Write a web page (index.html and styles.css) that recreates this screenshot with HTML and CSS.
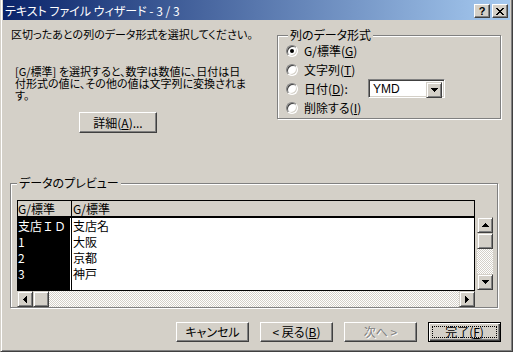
FILE: index.html
```html
<!DOCTYPE html>
<html lang="ja">
<head>
    <meta charset="UTF-8">
    <title>テキスト ファイル ウィザード - 3 / 3</title>
    <link rel="stylesheet" href="styles.css">
</head>
<body>
    <div class="window">
        <div class="titlebar">
            <span class="title">テキスト ファイル ウィザード - 3 / 3</span>
            <div class="caption-btns">
                <span class="cap-btn help">?</span>
                <span class="cap-btn close">
                    <svg width="8" height="7" viewBox="0 0 8 7"><path d="M0 0h2v1h1v1h2V1h1V0h2v1H7v1H6v1H5v1h1v1h1v1h1v1H6V6H5V5H3v1H2v1H0V6h1V5h1V4h1V3H2V2H1V1H0z" fill="#000"/></svg>
                </span>
            </div>
        </div>

        <div class="content">
            <div class="top">
                <div class="intro">
                    <p class="lead">区切ったあとの列のデータ形式を選択してください。</p>
                    <p class="note">[G/標準] を選択すると、数字は数値に、日付は日<br>付形式の値に、その他の値は文字列に変換されま<br>す。</p>
                    <button class="btn btn-detail">詳細(<u>A</u>)...</button>
                </div>

                <fieldset class="group format">
                    <legend>列のデータ形式</legend>
                    <div class="radio-row"><span class="radio checked"></span><span>G/標準(<u>G</u>)</span></div>
                    <div class="radio-row"><span class="radio"></span><span>文字列(<u>T</u>)</span></div>
                    <div class="radio-row">
                        <span class="radio"></span><span class="date-label">日付(<u>D</u>):</span>
                        <div class="combo">
                            <span class="combo-value">YMD</span>
                            <span class="sb-btn combo-btn">
                                <svg width="7" height="4" viewBox="0 0 7 4"><path d="M0 0h7v1H0zM1 1h5v1H1zM2 2h3v1H2zM3 3h1v1H3z" fill="#000"/></svg>
                            </span>
                        </div>
                    </div>
                    <div class="radio-row"><span class="radio"></span><span>削除する(<u>I</u>)</span></div>
                </fieldset>
            </div>

            <fieldset class="group preview">
                <legend>データのプレビュー</legend>
                <div class="preview-body">
                    <div class="grid-wrap">
                        <div class="grid">
                            <div class="grid-head">
                                <div class="c1">G/標準</div>
                                <div class="c2">G/標準</div>
                            </div>
                            <div class="grid-rows">
                                <div class="row"><div class="c1">支店ＩＤ</div><div class="c2">支店名</div></div>
                                <div class="row"><div class="c1">1</div><div class="c2">大阪</div></div>
                                <div class="row"><div class="c1">2</div><div class="c2">京都</div></div>
                                <div class="row"><div class="c1">3</div><div class="c2">神戸</div></div>
                                <div class="row filler"><div class="c1"></div><div class="c2"></div></div>
                            </div>
                        </div>
                        <div class="hscroll">
                            <span class="sb-btn">
                                <svg width="4" height="7" viewBox="0 0 4 7"><path d="M3 0h1v7H3zM2 1h1v5H2zM1 2h1v3H1zM0 3h1v1H0z" fill="#000"/></svg>
                            </span>
                            <span class="sb-btn"></span>
                            <span class="track"></span>
                            <span class="sb-btn">
                                <svg width="4" height="7" viewBox="0 0 4 7"><path d="M0 0h1v7H0zM1 1h1v5H1zM2 2h1v3H2zM3 3h1v1H3z" fill="#000"/></svg>
                            </span>
                        </div>
                    </div>
                    <div class="vscroll">
                        <span class="sb-btn">
                            <svg width="7" height="4" viewBox="0 0 7 4"><path d="M3 0h1v1H3zM2 1h3v1H2zM1 2h5v1H1zM0 3h7v1H0z" fill="#000"/></svg>
                        </span>
                        <span class="sb-btn"></span>
                        <span class="track"></span>
                        <span class="sb-btn">
                            <svg width="7" height="4" viewBox="0 0 7 4"><path d="M0 0h7v1H0zM1 1h5v1H1zM2 2h3v1H2zM3 3h1v1H3z" fill="#000"/></svg>
                        </span>
                    </div>
                </div>
            </fieldset>

            <div class="buttons">
                <button class="btn">キャンセル</button>
                <button class="btn">&lt; 戻る(<u>B</u>)</button>
                <button class="btn disabled">次へ &gt;</button>
                <button class="btn btn-default">完了(<u>F</u>)</button>
            </div>
        </div>
    </div>
</body>
</html>
```

FILE: styles.css
```css
html, body {
    margin: 0;
    padding: 0;
    overflow: hidden;
}

body {
    font-family: "Noto Sans CJK JP", sans-serif;
    font-size: 12px;
    line-height: 12px;
    color: #000;
    font-feature-settings: "palt";
}

.window {
    box-sizing: border-box;
    width: 513px;
    height: 352px;
    background: #d4d0c8;
    border-left: 1px solid #d4d0c8;
    border-right: 1px solid #404040;
    border-bottom: 1px solid #404040;
    box-shadow: inset 1px 0 #fff, inset -1px -1px #808080;
    padding: 0 2px 2px 2px;
}

/* title bar */
.titlebar {
    height: 20px;
    display: flex;
    align-items: flex-start;
    background: linear-gradient(to right, #0a246a, #a6caf0);
}

.title {
    color: #fff;
    padding: 4px 0 0 2px;
    line-height: 13px;
}

.caption-btns {
    margin-left: auto;
    display: flex;
    gap: 2px;
    padding: 4px 2px 0 0;
}

.cap-btn {
    box-sizing: border-box;
    width: 16px;
    height: 14px;
    background: #d4d0c8;
    border: 1px solid;
    border-color: #fff #404040 #404040 #fff;
    box-shadow: inset -1px -1px #808080;
    display: flex;
    align-items: center;
    justify-content: center;
}

.help {
    font-family: "Liberation Sans", sans-serif;
    font-weight: bold;
    font-size: 11px;
    line-height: 11px;
}

/* top part */
.top {
    display: flex;
    align-items: flex-start;
    padding: 8px 0 0 8px;
}

.intro {
    width: 266px;
}

.lead {
    margin: 0;
    font-size: 11px;
}

.note {
    margin: 25px 0 0 4px;
    font-size: 11px;
}

.btn {
    box-sizing: border-box;
    width: 73px;
    height: 20px;
    padding: 0;
    font-family: inherit;
    font-size: 12px;
    line-height: 12px;
    color: #000;
    background: #d4d0c8;
    border: 1px solid;
    border-color: #fff #404040 #404040 #fff;
    box-shadow: inset -1px -1px #808080;
    font-feature-settings: "palt";
}

.btn-detail {
    display: block;
    width: 78px;
    height: 21px;
    margin: 11px 0 0 68px;
}

/* group boxes */
.group {
    box-sizing: border-box;
    margin: 0;
    padding: 0;
    min-inline-size: 0;
    border: 1px solid #808080;
    box-shadow: 1px 1px 0 #fff, inset 1px 1px 0 #fff;
}

.group legend {
    padding: 0 2px;
    line-height: 12px;
    background: #d4d0c8;
}

.format {
    width: 224px;
    margin-top: 1px;
    padding: 0 0 1px 8px;
}

.format legend {
    margin-left: 2px;
}

.radio-row {
    display: flex;
    align-items: center;
    height: 19px;
}

.radio {
    box-sizing: border-box;
    width: 12px;
    height: 12px;
    margin-right: 6px;
    border-radius: 50%;
    background: #fff;
    border: 1px solid;
    border-color: #808080 #fff #fff #808080;
    box-shadow: inset 1px 1px #404040, inset -1px -1px #d4d0c8;
    display: flex;
    align-items: center;
    justify-content: center;
}

.radio.checked::after {
    content: "";
    width: 4px;
    height: 4px;
    border-radius: 50%;
    background: #000;
}

.date-label {
    width: 64px;
}

.combo {
    box-sizing: border-box;
    width: 77px;
    height: 19px;
    padding: 2px;
    display: flex;
    background: #fff;
    border: 1px solid;
    border-color: #808080 #fff #fff #808080;
    box-shadow: inset 1px 1px #404040, inset -1px -1px #d4d0c8;
}

.combo-value {
    flex: 1;
    padding-left: 2px;
    font-family: "Liberation Sans", sans-serif;
    line-height: 15px;
}

.combo-btn {
    width: 16px;
    height: 15px;
}

/* scroll bar parts */
.sb-btn {
    box-sizing: border-box;
    width: 16px;
    height: 16px;
    flex: none;
    background: #d4d0c8;
    border: 1px solid;
    border-color: #d4d0c8 #404040 #404040 #d4d0c8;
    box-shadow: inset 1px 1px #fff, inset -1px -1px #808080;
    display: flex;
    align-items: center;
    justify-content: center;
}

.track {
    flex: 1;
    background: repeating-conic-gradient(#fff 0 25%, #d4d0c8 0 50%) 0 0 / 2px 2px;
}

/* preview */
.preview {
    width: 488px;
    margin: 44px 0 0 7px;
    padding: 0 0 0 6px;
}

.preview-body {
    display: flex;
    align-items: flex-start;
    padding-top: 11px;
}

.grid-wrap {
    width: 458px;
}

.grid {
    box-sizing: border-box;
    height: 91px;
    border: 1px solid #000;
    background: #fff;
    font-feature-settings: normal;
}

.grid-head {
    display: flex;
    height: 15px;
    line-height: 15px;
    background: #d4d0c8;
    border-bottom: 2px solid #000;
}

.grid .c1 {
    width: 53px;
    flex: none;
}

.grid .c2 {
    flex: 1;
    padding-left: 1px;
    border-left: 1px solid #000;
}

.grid-rows {
    height: 72px;
    display: flex;
    flex-direction: column;
    font-size: 12px;
    line-height: 16px;
}

.row {
    display: flex;
    height: 16px;
}

.row.filler {
    flex: 1;
}

.row .c1 {
    background: #000;
    color: #fff;
    box-shadow: inset -1px 0 #fff;
}

.hscroll {
    display: flex;
    height: 16px;
}

.vscroll {
    display: flex;
    flex-direction: column;
    width: 16px;
    height: 73px;
    margin: 17px 0 0 2px;
}

/* bottom buttons */
.buttons {
    display: flex;
    justify-content: flex-end;
    margin-top: 14px;
    padding-right: 9px;
}

.buttons .btn + .btn {
    margin-left: 11px;
}

.buttons .disabled {
    margin-left: 2px;
    color: #808080;
    text-shadow: 1px 1px 0 #fff;
}

.buttons .btn-default {
    position: relative;
    margin-left: 10px;
    border-color: #000;
    box-shadow: inset 1px 1px #fff, inset -1px -1px #404040, inset -2px -2px #808080;
}

.btn-default::after {
    content: "";
    position: absolute;
    top: 3px;
    left: 3px;
    right: 3px;
    bottom: 3px;
    border: 1px dotted #000;
}
```
